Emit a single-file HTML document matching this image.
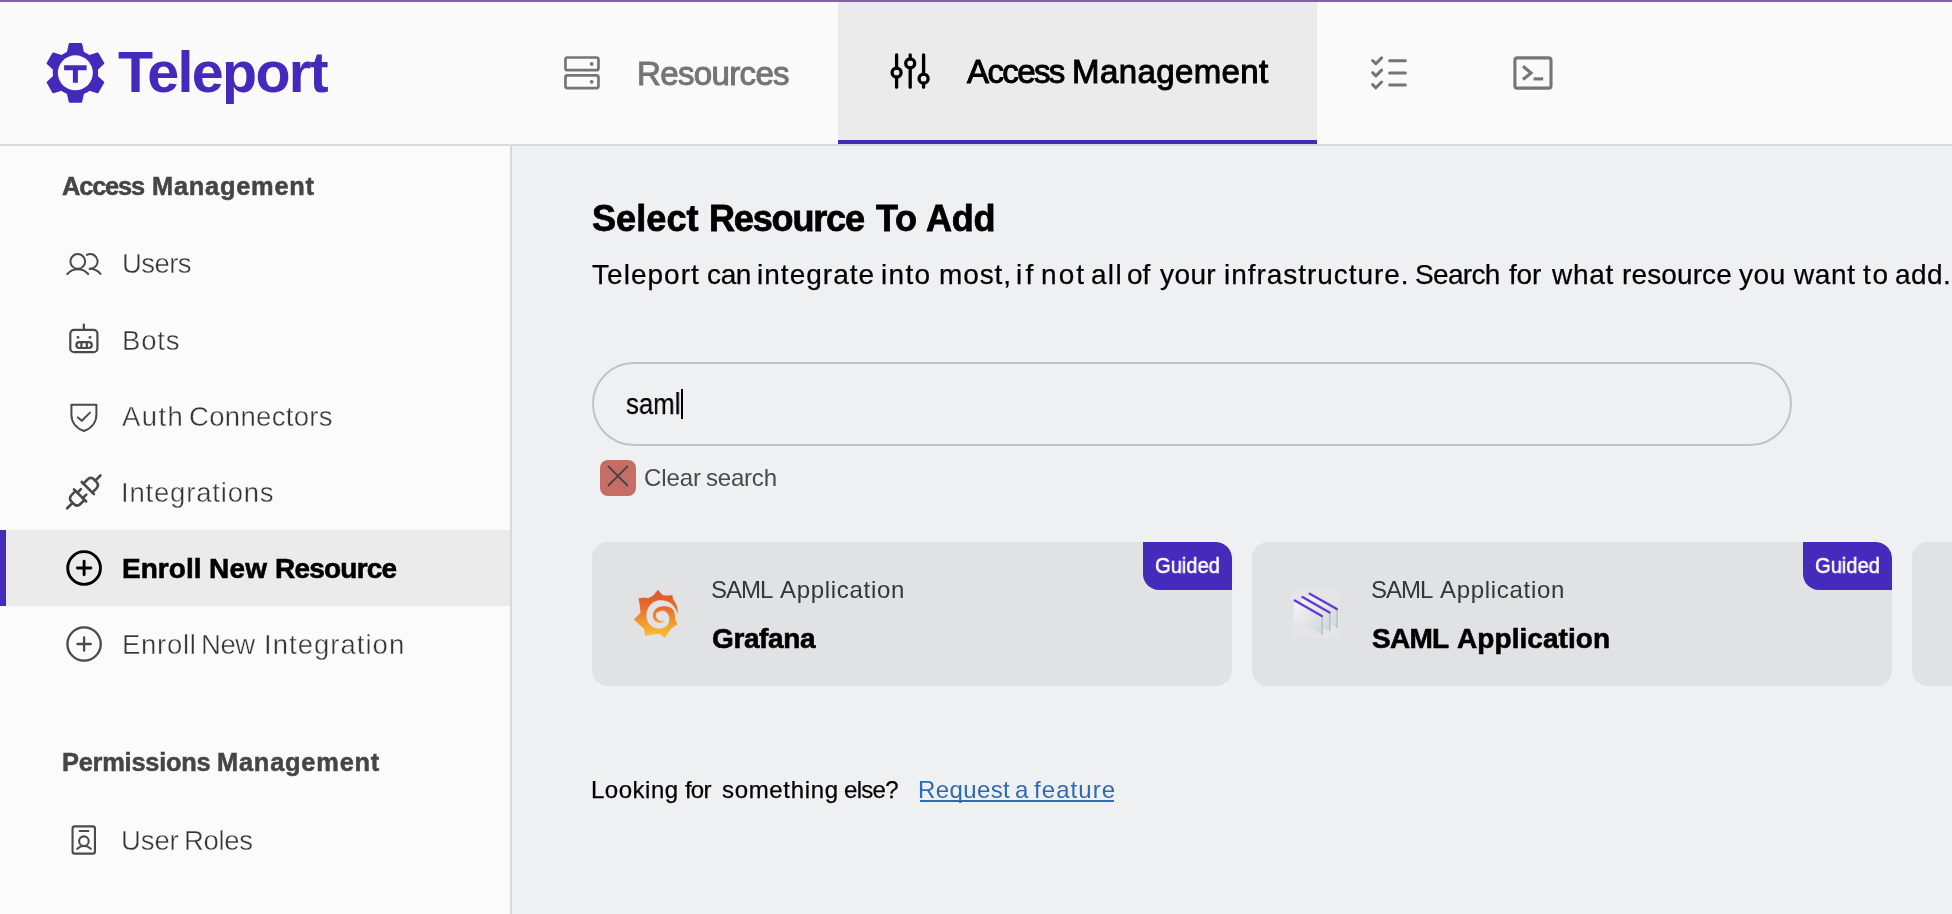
<!DOCTYPE html>
<html lang="en">
<head>
<meta charset="utf-8">
<title>Teleport - Enroll New Resource</title>
<style>
*{box-sizing:border-box;margin:0;padding:0}
html,body{width:1952px;height:914px;overflow:hidden}
body{position:relative;background:#eff0f2;font-family:"Liberation Sans",sans-serif;color:#000}
.abs,header *,aside *,main *{position:absolute}
span,h1,h2,p,a{white-space:pre;line-height:1;font-family:"Liberation Sans",sans-serif;will-change:transform}
#strip{left:0;top:0;width:1952px;height:2px;background:#7f62a8;z-index:5}
header{position:absolute;left:0;top:0;width:1952px;height:146px;background:#fafafa;border-bottom:2px solid #d9d9d9}
#tabactive{left:838px;top:2px;width:479px;height:142px;background:#ebebeb;border-bottom:4px solid #442bbc}
aside{position:absolute;left:0;top:146px;width:512px;height:768px;background:#fbfbfb;border-right:2px solid #d9d9d9}
#rowactive{left:0;top:384px;width:510px;height:76px;background:#ebebeb;border-left:6px solid #442bbc}
main{position:absolute;left:512px;top:146px;width:1440px;height:768px}
/* text coordinates are page-absolute: wrappers offset handled with negative margins */
aside>.t{margin-top:-146px}
main>.t{margin-left:-512px;margin-top:-146px}
#search{left:592px;top:362px;width:1200px;height:84px;border:2px solid #c2c2c2;border-radius:42px}
#caret{left:681.2px;top:389.4px;width:1.8px;height:29.4px;background:#000}
#clearbtn{left:600px;top:460px;width:36px;height:36px;border-radius:8px;background:#c66e66}
#f2u{left:920px;top:800.2px;width:194px;height:1.5px;background:#2c6bb6}
.card{top:542px;width:640px;height:144px;border-radius:16px;background:#e1e2e4;overflow:hidden}
.badge{right:0;top:0;width:89px;height:48px;background:#442bbc;border-radius:0 16px 0 16px}
svg{overflow:visible}
#logo{left:0;top:44.00px;font-size:57.4px;font-weight:700;color:#432abc;}
#tab1{left:0;top:57.40px;font-size:33px;font-weight:400;color:#757575;-webkit-text-stroke:1px #757575;}
#tab2{left:0;top:55.30px;font-size:33px;font-weight:400;color:#000;-webkit-text-stroke:1px #000;}
#sh1{left:0;top:173.60px;font-size:25.4px;font-weight:700;color:#454545;-webkit-text-stroke:0.5px #454545;}
#s1{left:0;top:250.40px;font-size:27.5px;font-weight:400;color:#353535;-webkit-text-stroke:0.4px #fbfbfb;}
#s2{left:0;top:326.60px;font-size:27.5px;font-weight:400;color:#353535;-webkit-text-stroke:0.4px #fbfbfb;}
#s3{left:0;top:403.00px;font-size:27.5px;font-weight:400;color:#353535;-webkit-text-stroke:0.4px #fbfbfb;}
#s4{left:0;top:478.70px;font-size:27.5px;font-weight:400;color:#353535;-webkit-text-stroke:0.4px #fbfbfb;}
#s5{left:0;top:554.70px;font-size:28px;font-weight:700;color:#000;-webkit-text-stroke:0.6px #000;}
#s6{left:0;top:630.80px;font-size:27.5px;font-weight:400;color:#353535;-webkit-text-stroke:0.4px #fbfbfb;}
#sh2{left:0;top:749.50px;font-size:25.4px;font-weight:700;color:#454545;-webkit-text-stroke:0.5px #454545;}
#s7{left:0;top:826.60px;font-size:27.5px;font-weight:400;color:#353535;-webkit-text-stroke:0.4px #fbfbfb;}
#h1{left:0;top:200.70px;font-size:36px;font-weight:700;color:#000;-webkit-text-stroke:0.8px #000;}
#p1{left:0;top:260.70px;font-size:28px;font-weight:400;color:#000;-webkit-text-stroke:0.25px #000;}
#q{left:625.81px;top:387.90px;font-size:30.4px;font-weight:400;color:#000;-webkit-text-stroke:0.25px #000;transform:scaleX(0.8476);transform-origin:0 0;}
#clr{left:0;top:465.70px;font-size:24px;font-weight:400;color:#4a4a4a;}
#c1a{left:0;top:577.80px;font-size:24px;font-weight:400;color:#363636;}
#c1b{left:0;top:624.60px;font-size:28px;font-weight:700;color:#000;-webkit-text-stroke:0.6px #000;}
#g1{left:1155.24px;top:556.00px;font-size:21.4px;font-weight:400;color:#fff;-webkit-text-stroke:0.5px #fff;transform:scaleX(0.9409);transform-origin:0 0;}
#c2a{left:0;top:577.80px;font-size:24px;font-weight:400;color:#363636;}
#c2b{left:0;top:624.60px;font-size:28px;font-weight:700;color:#000;-webkit-text-stroke:0.6px #000;}
#g2{left:1815.24px;top:556.00px;font-size:21.4px;font-weight:400;color:#fff;-webkit-text-stroke:0.5px #fff;transform:scaleX(0.9409);transform-origin:0 0;}
#f1{left:0;top:777.80px;font-size:24px;font-weight:400;color:#000;-webkit-text-stroke:0.25px #000;}
#f2{left:0;top:777.80px;font-size:24px;font-weight:400;color:#2c6bb6;}
</style>
</head>
<body>
<div id="strip" class="abs"></div>
<header>
  <svg class="" style="left:40px;top:38px" width="70" height="70" viewBox="40 38 70 70" ><path transform="rotate(0 75.45 72.85)" d="M67.50,53.85 L69.75,43.95 L81.15,43.95 L83.40,53.85 Z" fill="#432abc" stroke="#432abc" stroke-width="2" stroke-linejoin="round"/><path transform="rotate(60 75.45 72.85)" d="M67.50,53.85 L69.75,43.95 L81.15,43.95 L83.40,53.85 Z" fill="#432abc" stroke="#432abc" stroke-width="2" stroke-linejoin="round"/><path transform="rotate(120 75.45 72.85)" d="M67.50,53.85 L69.75,43.95 L81.15,43.95 L83.40,53.85 Z" fill="#432abc" stroke="#432abc" stroke-width="2" stroke-linejoin="round"/><path transform="rotate(180 75.45 72.85)" d="M67.50,53.85 L69.75,43.95 L81.15,43.95 L83.40,53.85 Z" fill="#432abc" stroke="#432abc" stroke-width="2" stroke-linejoin="round"/><path transform="rotate(240 75.45 72.85)" d="M67.50,53.85 L69.75,43.95 L81.15,43.95 L83.40,53.85 Z" fill="#432abc" stroke="#432abc" stroke-width="2" stroke-linejoin="round"/><path transform="rotate(300 75.45 72.85)" d="M67.50,53.85 L69.75,43.95 L81.15,43.95 L83.40,53.85 Z" fill="#432abc" stroke="#432abc" stroke-width="2" stroke-linejoin="round"/><circle cx="75.45" cy="72.85" r="22.7" fill="#432abc"/><circle cx="75.35000000000001" cy="72.85" r="17.5" fill="#fafafa"/><path d="M64.1,65.2 H86.6 V70.2 H77.9 V82.8 H72.9 V70.2 H64.1 Z" fill="#432abc"/></svg>
  <span id="logo"><span style="left:117.56px;letter-spacing:-1.642px">Teleport</span></span>
  <nav>
    <svg class="" style="left:560px;top:52px" width="44" height="42" viewBox="560 52 44 42" ><g fill="none" stroke="#757575" stroke-width="2.7"><rect x="565.45" y="57.5" width="33" height="12.65" rx="2"/><rect x="565.45" y="75.4" width="33" height="12.65" rx="2"/></g><circle cx="591.7" cy="63.9" r="1.9" fill="#757575"/><circle cx="591.7" cy="81.8" r="1.9" fill="#757575"/></svg>
    <span id="tab1"><span style="left:637.29px;letter-spacing:-0.642px">Resources</span></span>
    <div id="tabactive"></div>
    <svg class="" style="left:886px;top:50px" width="48" height="42" viewBox="886 50 48 42" ><g fill="none" stroke="#000" stroke-width="3.3" stroke-linecap="round"><path d="M896.6,54.8 V68.1 M896.6,77.1 V87.2"/><circle cx="896.6" cy="72.6" r="4.5"/><path d="M910.2,54.8 V58.8 M910.2,67.8 V87.2"/><circle cx="910.2" cy="63.3" r="4.5"/><path d="M923.6,54.8 V74.2 M923.6,83.2 V87.2"/><circle cx="923.6" cy="78.7" r="4.5"/></g></svg>
    <span id="tab2"><span style="left:966.64px;letter-spacing:-1.604px">Access</span> <span style="left:1071.89px;letter-spacing:0.403px">Management</span></span>
    <svg class="" style="left:1366px;top:52px" width="46" height="42" viewBox="1366 52 46 42" ><g fill="none" stroke="#757575" stroke-width="3" stroke-linecap="round" stroke-linejoin="round"><path d="M1389.6,60.8 H1405.4"/><path d="M1372.6,60.5 L1375.9,63.699999999999996 L1381.6,57.9"/><path d="M1389.6,73.0 H1405.4"/><path d="M1372.6,72.7 L1375.9,75.9 L1381.6,70.1"/><path d="M1389.6,84.9 H1405.4"/><path d="M1372.6,84.60000000000001 L1375.9,87.80000000000001 L1381.6,82.0"/></g></svg>
    <svg class="" style="left:1508px;top:52px" width="50" height="42" viewBox="1508 52 50 42" ><g fill="none" stroke="#757575" stroke-width="3.1"><rect x="1514.9" y="57.9" width="36.1" height="30.2" rx="2.4"/><path d="M1523.0,66.3 L1531,72.9 L1523.0,79.5"/><path d="M1533.6,78.9 H1543.2"/></g></svg>
  </nav>
</header>
<aside>
  <div id="rowactive"></div>
  <h2 id="sh1" class="t"><span style="left:62.12px;letter-spacing:-1.156px">Access</span> <span style="left:151.75px;letter-spacing:0.756px">Management</span></h2>
  <svg class="t" style="left:62px;top:248px" width="46" height="32" viewBox="62 248 46 32" ><g fill="none" stroke="#4a4a4a" stroke-width="2" stroke-linecap="round"><circle cx="77.77" cy="261.4" r="7.35"/><path d="M67.3,274.0 A13.75,13.75 0 0 1 88.2,274.0"/><path d="M86.83,254.89 A7.35,7.35 0 1 1 89.75,268.73"/><path d="M89.75,268.73 A13.75,13.75 0 0 1 100.5,273.9"/></g></svg><span id="s1" class="t"><span style="left:121.68px;letter-spacing:-0.574px">Users</span></span>
  <svg class="t" style="left:64px;top:320px" width="40" height="38" viewBox="64 320 40 38" ><g fill="none" stroke="#4a4a4a" stroke-width="2.2" stroke-linecap="round"><rect x="70.3" y="329.9" width="27.1" height="22.3" rx="3.8"/><path d="M83.85,324.5 V329.9"/><rect x="76.4" y="342.2" width="15.4" height="5.8" rx="2.9"/><path d="M81.4,342.2 V348 M86.8,342.2 V348"/></g><circle cx="78" cy="337.3" r="1.4" fill="#4a4a4a"/><circle cx="90" cy="337.3" r="1.4" fill="#4a4a4a"/></svg><span id="s2" class="t"><span style="left:121.54px;letter-spacing:0.806px">Bots</span></span>
  <svg class="t" style="left:64px;top:398px" width="40" height="38" viewBox="64 398 40 38" ><g fill="none" stroke="#4a4a4a" stroke-width="2" stroke-linecap="round" stroke-linejoin="round"><path d="M71.4,404.7 H96.4 V414.5 C96.4,424.8 88.5,429.4 83.9,431.0 C79.3,429.4 71.4,424.8 71.4,414.5 Z"/><path d="M77.9,417.4 L81.8,420.8 L90,412.6"/></g></svg><span id="s3" class="t"><span style="left:122.25px;letter-spacing:1.420px">Auth</span> <span style="left:188.90px;letter-spacing:0.328px">Connectors</span></span>
  <svg class="t" style="left:62px;top:470px" width="44" height="44" viewBox="62 470 44 44" ><g fill="none" stroke="#4a4a4a" stroke-width="2.6" stroke-linecap="round" stroke-linejoin="round"><g transform="translate(87.85,488.05) rotate(-45)"><path d="M0,-8.6 V8.6"/><path d="M0,-6.3 H5.5 Q10.5,-6.3 10.5,-1.3 V1.3 Q10.5,6.3 5.5,6.3 H0"/><path d="M10.5,0 H17.8"/></g><g transform="translate(80.05,495.4) rotate(-45)"><path d="M0,-8.6 V8.6"/><path d="M0,-6.3 H-5.5 Q-10.5,-6.3 -10.5,-1.3 V1.3 Q-10.5,6.3 -5.5,6.3 H0"/><path d="M-10.5,0 H-18.2"/><path d="M0,-3.8 H5 M0,3.8 H5"/></g></g></svg><span id="s4" class="t"><span style="left:121.26px;letter-spacing:0.810px">Integrations</span></span>
  <svg class="t" style="left:62px;top:545.9px" width="44" height="44" viewBox="62 545.9 44 44" ><g fill="none" stroke="#000" stroke-width="2.9" stroke-linecap="round"><circle cx="84.1" cy="567.9" r="16.35"/><path d="M77.39999999999999,567.9 H90.8 M84.1,561.1999999999999 V574.6"/></g></svg><span id="s5" class="t"><span style="left:122.43px;letter-spacing:0.042px">Enroll</span> <span style="left:208.83px;letter-spacing:0.220px">New</span> <span style="left:274.63px;letter-spacing:-0.785px">Resource</span></span>
  <svg class="t" style="left:62px;top:621.9px" width="44" height="44" viewBox="62 621.9 44 44" ><g fill="none" stroke="#4a4a4a" stroke-width="2.3" stroke-linecap="round"><circle cx="84.1" cy="643.9" r="16.650000000000002"/><path d="M77.39999999999999,643.9 H90.8 M84.1,637.1999999999999 V650.6"/></g></svg><span id="s6" class="t"><span style="left:121.54px;letter-spacing:0.717px">Enroll</span> <span style="left:201.24px;letter-spacing:-0.413px">New</span> <span style="left:263.66px;letter-spacing:1.025px">Integration</span></span>
  <h2 id="sh2" class="t"><span style="left:61.75px;letter-spacing:-0.237px">Permissions</span> <span style="left:217.05px;letter-spacing:0.790px">Management</span></h2>
  <svg class="t" style="left:66px;top:820px" width="36" height="40" viewBox="66 820 36 40" ><g fill="none" stroke="#4a4a4a" stroke-width="2.1" stroke-linecap="round"><rect x="72.55" y="826.35" width="22.4" height="27.3" rx="2.2"/><path d="M79.6,831 H88.4"/><circle cx="83.9" cy="841.2" r="4.8"/><path d="M77.2,848.8 A9.8,9.8 0 0 1 90.8,848.8"/></g></svg><span id="s7" class="t"><span style="left:121.38px;letter-spacing:-0.095px">User</span> <span style="left:184.44px;letter-spacing:-0.316px">Roles</span></span>
</aside>
<main>
  <h1 id="h1" class="t"><span style="left:592.46px;letter-spacing:0.100px">Select</span> <span style="left:709.39px;letter-spacing:-1.163px">Resource</span> <span style="left:875.80px;letter-spacing:-0.202px">To</span> <span style="left:925.50px;letter-spacing:-0.257px">Add</span></h1>
  <p id="p1" class="t"><span style="left:592.30px;letter-spacing:1.037px">Teleport</span> <span style="left:706.74px;letter-spacing:-0.349px">can</span> <span style="left:756.75px;letter-spacing:1.025px">integrate</span> <span style="left:881.15px;letter-spacing:1.348px">into</span> <span style="left:938.67px;letter-spacing:0.889px">most,</span> <span style="left:1015.65px;letter-spacing:3.182px">if</span> <span style="left:1040.67px;letter-spacing:2.088px">not</span> <span style="left:1091.34px;letter-spacing:1.298px">all</span> <span style="left:1127.35px;letter-spacing:-0.075px">of</span> <span style="left:1160.26px;letter-spacing:0.405px">your</span> <span style="left:1224.45px;letter-spacing:0.951px">infrastructure.</span> <span style="left:1415.35px;letter-spacing:-0.676px">Search</span> <span style="left:1508.63px;letter-spacing:-0.238px">for</span> <span style="left:1552.27px;letter-spacing:0.719px">what</span> <span style="left:1622.27px;letter-spacing:0.117px">resource</span> <span style="left:1739.36px;letter-spacing:0.611px">you</span> <span style="left:1793.77px;letter-spacing:0.619px">want</span> <span style="left:1862.90px;letter-spacing:1.790px">to</span> <span style="left:1895.24px;letter-spacing:0.432px">add.</span></p>
  <div id="search" class="t"></div>
  <span id="q" class="t">saml</span>
  <div id="caret" class="t"></div>
  <div id="clearbtn" class="t"><svg class="" style="left:0;top:0" width="36" height="36" viewBox="600 460 36 36" style="left:0;top:0"><path d="M608.4,466.4 L627.4,485.5 M627.4,466.4 L608.4,485.5" stroke="#444" stroke-width="1.8" stroke-linecap="round" fill="none"/></svg></div>
  <span id="clr" class="t"><span style="left:643.88px;letter-spacing:-0.111px">Clear</span> <span style="left:706.23px;letter-spacing:-0.204px">search</span></span>
  <div class="card t" style="left:592px"><div class="badge"></div></div>
  <div class="card t" style="left:1252px"><div class="badge"></div></div>
  <div class="card t" style="left:1912px"></div>
  <svg class="t" style="left:620px;top:580px" width="70" height="70" viewBox="620 580 70 70" ><defs><linearGradient id="gg" gradientUnits="userSpaceOnUse" x1="0" y1="590" x2="0" y2="638"><stop offset="0" stop-color="#e0522b"/><stop offset="0.35" stop-color="#e96b2c"/><stop offset="1" stop-color="#f8c733"/></linearGradient></defs><path d="M677.98,613.47 L677.44,608.34 L676.29,604.51 L674.53,601.44 L673.00,599.15 L672.23,595.16 L666.72,595.78 L662.51,595.16 L657.91,589.96 L653.70,595.32 L648.49,598.23 L642.98,597.77 L638.61,598.53 L640.07,606.04 L640.53,613.09 L634.02,619.44 L639.15,624.42 L644.35,629.02 L644.66,632.08 L645.12,635.76 L652.17,634.38 L659.83,633.76 L664.80,637.67 L667.48,633.99 L670.16,629.78 L673.61,626.72 L677.29,624.42 L675.30,619.83 L674.76,614.85 C674.67,614.40 674.54,613.06 674.22,612.17 C673.90,611.27 673.52,610.25 672.85,609.49 C672.17,608.72 671.31,608.08 670.16,607.57 C669.02,607.06 667.29,606.59 665.95,606.42 C664.61,606.26 663.53,606.36 662.12,606.58 C660.72,606.79 658.80,607.05 657.53,607.72 C656.25,608.40 655.20,609.51 654.46,610.63 C653.72,611.76 653.28,613.19 653.09,614.46 C652.89,615.74 652.96,617.21 653.32,618.29 C653.67,619.38 654.40,620.31 655.23,620.97 C656.06,621.64 657.27,622.02 658.29,622.28 C659.31,622.53 660.36,622.58 661.36,622.51 C662.35,622.43 663.78,621.93 664.27,621.82 C663.78,621.74 662.35,621.66 661.36,621.36 C660.36,621.05 659.14,620.62 658.29,619.98 C657.45,619.34 656.71,618.38 656.30,617.53 C655.89,616.67 655.66,615.74 655.84,614.85 C656.02,613.95 656.39,612.87 657.37,612.17 C658.36,611.46 660.31,610.70 661.74,610.63 C663.17,610.57 664.80,611.02 665.95,611.78 C667.10,612.55 668.05,614.02 668.63,615.23 C669.22,616.44 669.48,617.72 669.48,619.06 C669.48,620.40 669.22,621.97 668.63,623.27 C668.05,624.57 667.42,625.97 665.95,626.87 C664.48,627.78 661.87,628.58 659.83,628.71 C657.78,628.84 655.49,628.42 653.70,627.64 C651.91,626.86 650.28,625.59 649.10,624.04 C647.93,622.48 647.10,620.14 646.65,618.29 C646.21,616.44 646.14,614.72 646.42,612.93 C646.70,611.15 647.38,609.23 648.34,607.57 C649.29,605.91 650.51,604.20 652.17,602.98 C653.83,601.75 656.25,600.63 658.29,600.22 C660.34,599.81 662.51,600.13 664.42,600.53 C666.34,600.92 668.25,601.67 669.78,602.59 C671.31,603.51 672.53,604.76 673.61,606.04 C674.70,607.32 675.56,609.01 676.29,610.25 C677.02,611.49 677.70,612.93 677.98,613.47 Z" fill="url(#gg)" stroke="url(#gg)" stroke-width="0.25" stroke-linejoin="round"/></svg>
  <span id="c1a" class="t"><span style="left:711.41px;letter-spacing:-1.024px">SAML</span> <span style="left:780.15px;letter-spacing:0.698px">Application</span></span>
  <span id="c1b" class="t"><span style="left:712.45px;letter-spacing:-0.393px">Grafana</span></span>
  <span id="g1" class="t">Guided</span>
  <svg class="t" style="left:1280px;top:580px" width="70" height="70" viewBox="1280 580 70 70" ><defs><linearGradient id="ap" x1="0" y1="0" x2="1" y2="1"><stop offset="0" stop-color="#f6f7f8"/><stop offset="1" stop-color="#cfd6d9"/></linearGradient></defs><rect x="1292.3" y="590" width="47.4" height="47.4" fill="#e7e8ea" opacity="0.6"/><path d="M1309.10,592.87 L1337.21,608.72 L1337.21,627.87 L1309.10,612.93 Z" fill="url(#ap)"/><path d="M1336.60,608.72 L1337.67,609.03 L1337.67,627.87 L1336.60,627.87 Z" fill="#a9b6bc"/><path d="M1309.72,593.63 L1336.83,609.10" stroke="#6637d4" stroke-width="2.3" stroke-linecap="round"/><path d="M1301.83,596.31 L1329.93,612.17 L1329.93,631.31 L1301.83,616.38 Z" fill="url(#ap)"/><path d="M1329.32,612.17 L1330.39,612.47 L1330.39,631.31 L1329.32,631.31 Z" fill="#a9b6bc"/><path d="M1302.44,597.08 L1329.55,612.55" stroke="#6637d4" stroke-width="2.3" stroke-linecap="round"/><path d="M1294.17,599.76 L1322.28,615.61 L1322.28,634.76 L1294.17,619.83 Z" fill="url(#ap)"/><path d="M1321.66,615.61 L1322.74,615.92 L1322.74,634.76 L1321.66,634.76 Z" fill="#a9b6bc"/><path d="M1294.78,600.53 L1321.89,616.00" stroke="#6637d4" stroke-width="2.3" stroke-linecap="round"/></svg>
  <span id="c2a" class="t"><span style="left:1371.21px;letter-spacing:-1.024px">SAML</span> <span style="left:1439.95px;letter-spacing:0.698px">Application</span></span>
  <span id="c2b" class="t"><span style="left:1372.09px;letter-spacing:-0.753px">SAML</span> <span style="left:1456.90px;letter-spacing:0.068px">Application</span></span>
  <span id="g2" class="t">Guided</span>
  <span id="f1" class="t"><span style="left:590.86px;letter-spacing:0.515px">Looking</span> <span style="left:684.89px;letter-spacing:-0.814px">for</span> <span style="left:722.36px;letter-spacing:0.666px">something</span> <span style="left:844.01px;letter-spacing:-0.704px">else?</span></span>
  <a id="f2" class="t"><span style="left:918.13px;letter-spacing:0.392px">Request</span> <span style="left:1014.72px;letter-spacing:0.000px">a</span> <span style="left:1033.86px;letter-spacing:1.081px">feature</span></a>
  <div id="f2u" class="t"></div>
</main>
</body>
</html>
